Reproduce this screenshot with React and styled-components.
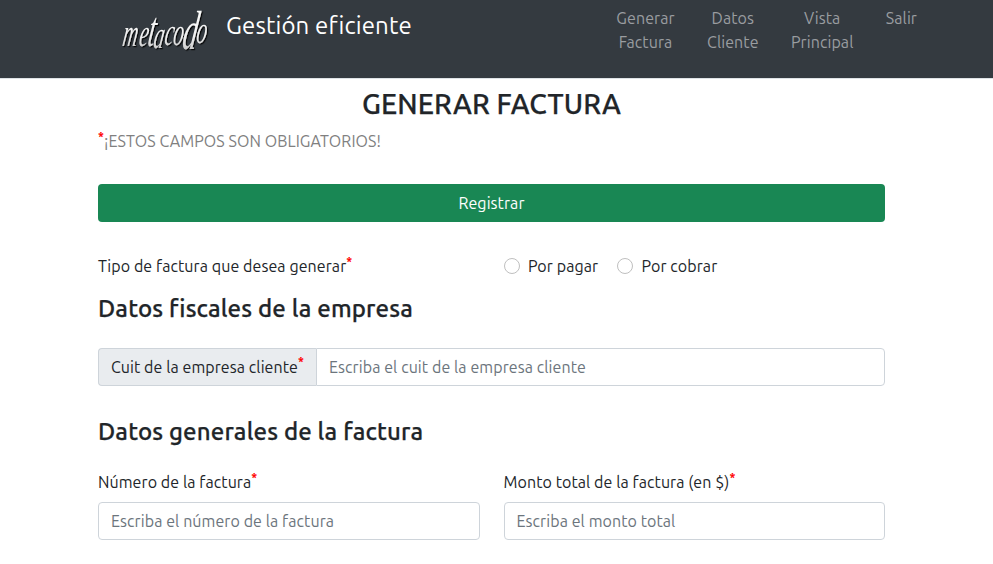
import React from 'react';
import styled, { createGlobalStyle } from 'styled-components';

const GlobalStyle = createGlobalStyle`
  *, *::before, *::after { box-sizing: border-box; }
  html, body { margin: 0; background: #fff; overflow: hidden; }
  body {
    font-family: Ubuntu, "Noto Sans", sans-serif;
    font-size: 16px;
    line-height: 24px;
    letter-spacing: 0.08px;
    color: #212529;
  }
`;

const Header = styled.header`
  display: flex;
  align-items: flex-start;
  height: 79px;
  padding: 6px 76px 0 120px;
  border-bottom: 1px solid #dee2e6;
  background: #343a40;
`;

const BrandLink = styled.a`
  display: flex;
  align-items: flex-start;
  gap: 16px;
  color: #fff;
  font-size: 24px;
  letter-spacing: 0.12px;
  line-height: 39px;
  text-decoration: none;
  white-space: nowrap;
`;

const Logo = styled.svg`
  display: block;
  width: 90px;
  height: 52px;
  overflow: visible;
`;

const LogoWord = styled.text`
  font-family: "Liberation Serif", serif;
  font-style: italic;
  font-size: 39px;
  letter-spacing: 0;
`;

const TallLetter = styled.tspan`
  font-size: ${({ $size }) => $size}px;
`;

const Nav = styled.nav`
  display: flex;
  gap: 32.4px;
  margin-left: auto;
`;

const NavLink = styled.a`
  display: flex;
  flex-direction: column;
  align-items: center;
  color: #9a9da0;
  text-decoration: none;
`;

const Main = styled.main`
  width: 787px;
  margin: 0 0 0 98px;
  padding-top: 8px;
`;

const PageTitle = styled.h1`
  margin: 0 0 8px;
  font-size: 28px;
  font-weight: 500;
  letter-spacing: 0.15px;
  line-height: 34px;
  text-align: center;
  -webkit-text-stroke: 0.25px currentColor;
`;

const Notice = styled.p`
  margin: 0;
  color: #808080;
`;

const Star = styled.sup`
  position: relative;
  top: ${({ $raise }) => -6 - ($raise || 0)}px;
  color: red;
  font-size: 12px;
  font-weight: 700;
  line-height: 0;
  vertical-align: baseline;
`;

const SubmitButton = styled.button`
  display: block;
  width: 100%;
  height: 38px;
  margin: 31px 0 32px;
  padding: 0;
  border: 0;
  border-radius: 4px;
  background: #198754;
  color: #fff;
  font: inherit;
  letter-spacing: inherit;
`;

const Columns = styled.div`
  display: grid;
  grid-template-columns: 1fr 1fr;
  column-gap: 24px;
`;

const RadioGroup = styled.div`
  display: flex;
  gap: 19px;
`;

const RadioLabel = styled.label`
  display: flex;
  align-items: center;
  gap: 8.4px;
`;

const Radio = styled.input`
  appearance: none;
  width: 16px;
  height: 16px;
  margin: 0;
  border: 1px solid #bfbfbf;
  border-radius: 50%;
  background: #fff;
`;

const SectionTitle = styled.h2`
  margin: ${({ $top }) => $top}px 0 ${({ $bottom }) => $bottom}px;
  font-size: 24px;
  font-weight: 500;
  letter-spacing: 0.15px;
  line-height: 29px;
  -webkit-text-stroke: 0.25px currentColor;
`;

const InputGroup = styled.div`
  display: flex;
`;

const Addon = styled.label`
  flex: 0 0 218px;
  height: 38px;
  padding: 6px 0 6px 12px;
  border: 1px solid #ced4da;
  border-right: 0;
  border-radius: 4px 0 0 4px;
  background: #e9ecef;
  white-space: nowrap;
`;

const Field = styled.div`
  display: flex;
  flex-direction: column;
  gap: 8px;
`;

const TextInput = styled.input`
  flex: 1 1 auto;
  width: 100%;
  min-width: 0;
  height: 38px;
  padding: 6px 12px;
  border: 1px solid #ced4da;
  border-radius: ${({ $joined }) => ($joined ? '0 4px 4px 0' : '4px')};
  background: #fff;
  color: #212529;
  font: inherit;
  letter-spacing: inherit;
  &::placeholder { color: #6c757d; opacity: 1; }
`;

const LINKS = [
  ['Generar', 'Factura'],
  ['Datos', 'Cliente'],
  ['Vista', 'Principal'],
  ['Salir'],
];

function BrandLogo() {
  return (
    <Logo viewBox="0 0 90 52" aria-label="metacodo">
      <defs>
        <linearGradient id="metal" x1="0" y1="0" x2="0" y2="1">
          <stop offset="0" stopColor="#fff" />
          <stop offset="0.6" stopColor="#f0f0f0" />
          <stop offset="1" stopColor="#a8a8a8" />
        </linearGradient>
        <filter id="shade" x="-10%" y="-10%" width="120%" height="130%">
          <feDropShadow dx="1.2" dy="1.2" stdDeviation="0.5" floodColor="#000" floodOpacity="0.9" />
        </filter>
      </defs>
      <g filter="url(#shade)" fill="url(#metal)">
        <LogoWord transform="translate(0 40) skewX(-9) scale(0.53 1)">
          <tspan x="3">m</tspan>
          <tspan x="34">e</tspan>
          <TallLetter x="50" $size="50">t</TallLetter>
          <tspan x="62" y="2">a</tspan>
          <tspan x="82" y="-1">c</tspan>
          <tspan x="98" y="-1">o</tspan>
          <TallLetter x="116" y="3" $size="55">d</TallLetter>
          <tspan x="141" y="-3">o</tspan>
        </LogoWord>
      </g>
    </Logo>
  );
}

export default function App() {
  return (
    <>
      <GlobalStyle />
      <Header>
        <BrandLink>
          <BrandLogo />
          Gestión eficiente
        </BrandLink>
        <Nav>
          {LINKS.map((words) => (
            <NavLink key={words[0]}>
              {words.map((word) => <span key={word}>{word}</span>)}
            </NavLink>
          ))}
        </Nav>
      </Header>
      <Main>
        <PageTitle>GENERAR FACTURA</PageTitle>
        <Notice><Star>*</Star>¡ESTOS CAMPOS SON OBLIGATORIOS!</Notice>
        <SubmitButton type="button">Registrar</SubmitButton>
        <Columns>
          <div>Tipo de factura que desea generar<Star>*</Star></div>
          <RadioGroup>
            <RadioLabel><Radio type="radio" name="tipo" />Por pagar</RadioLabel>
            <RadioLabel><Radio type="radio" name="tipo" />Por cobrar</RadioLabel>
          </RadioGroup>
        </Columns>
        <SectionTitle $top={16} $bottom={25}>Datos fiscales de la empresa</SectionTitle>
        <InputGroup>
          <Addon>Cuit de la empresa cliente<Star $raise={1.5}>*</Star></Addon>
          <TextInput $joined placeholder="Escriba el cuit de la empresa cliente" />
        </InputGroup>
        <SectionTitle $top={31} $bottom={24}>Datos generales de la factura</SectionTitle>
        <Columns>
          <Field>
            <label>Número de la factura<Star>*</Star></label>
            <TextInput placeholder="Escriba el número de la factura" />
          </Field>
          <Field>
            <label>Monto total de la factura (en $)<Star>*</Star></label>
            <TextInput placeholder="Escriba el monto total" />
          </Field>
        </Columns>
      </Main>
    </>
  );
}
